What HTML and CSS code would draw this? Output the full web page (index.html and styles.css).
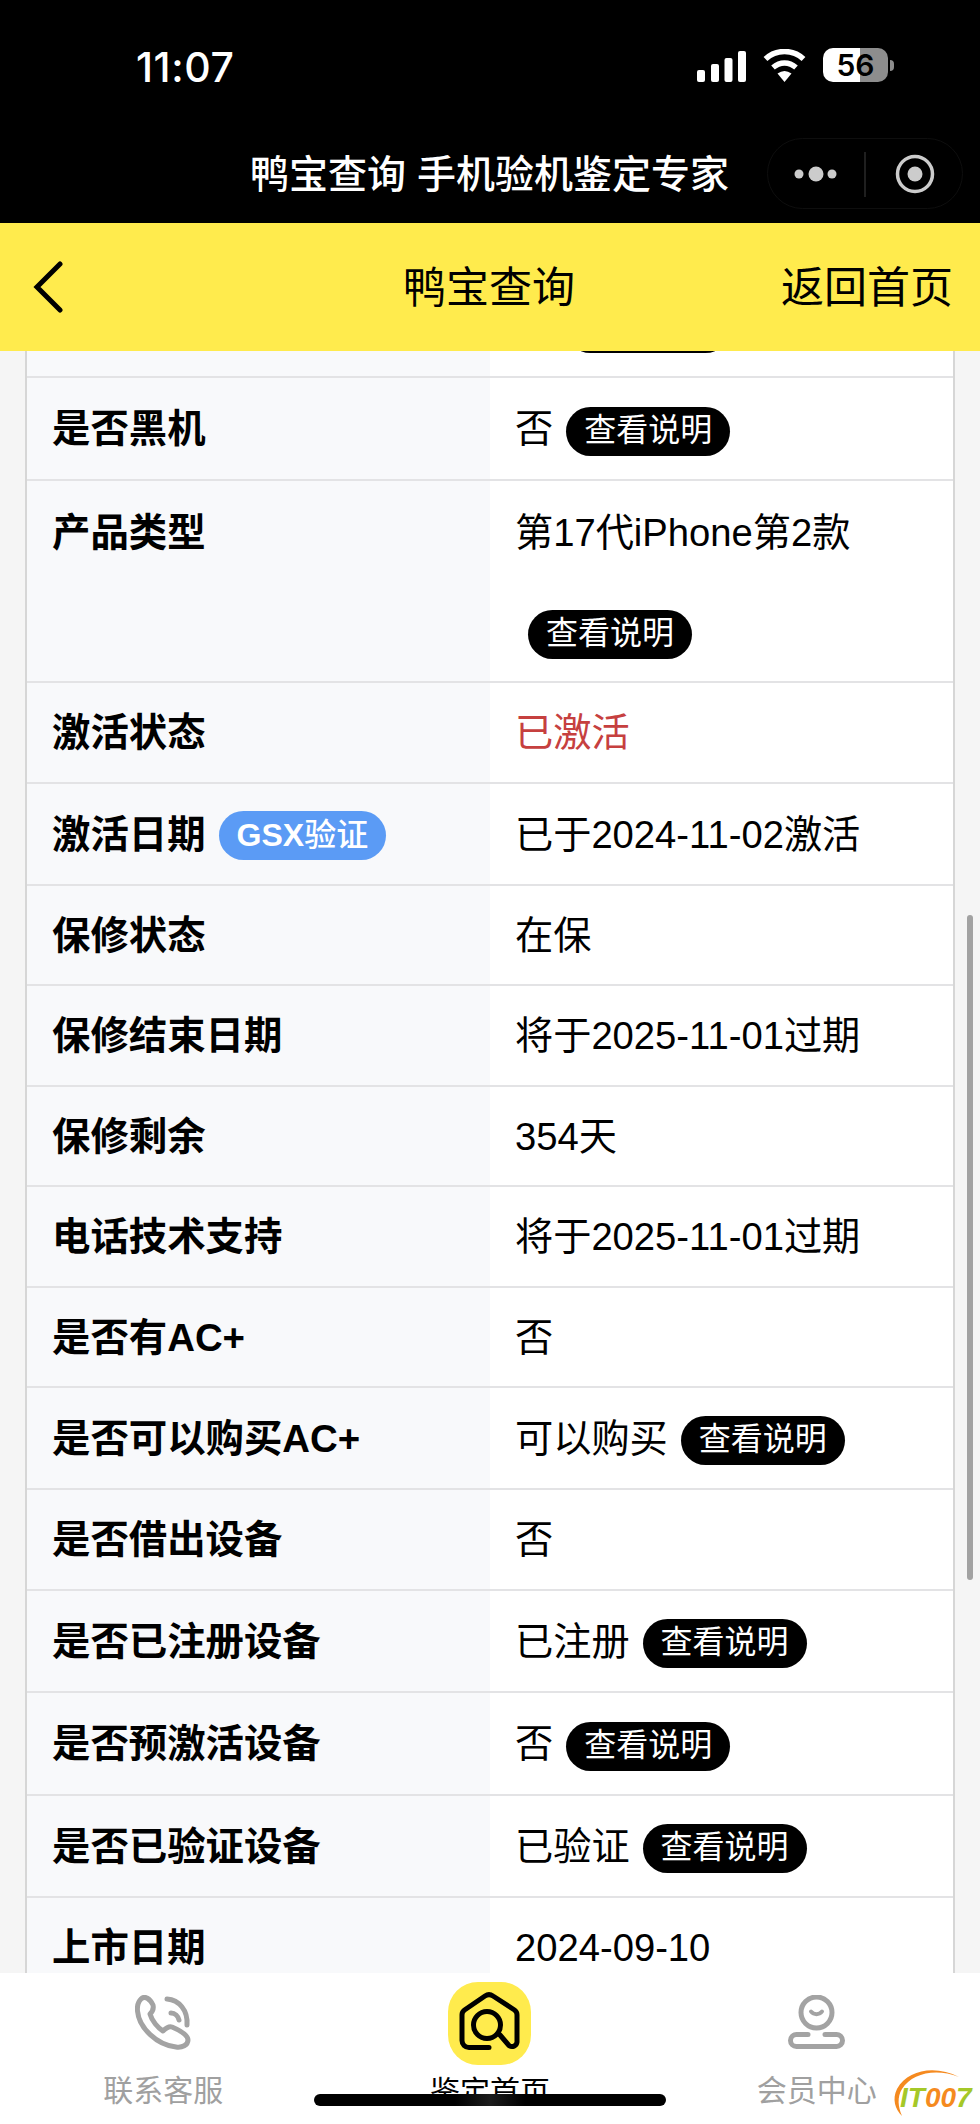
FILE: index.html
```html
<!DOCTYPE html>
<html lang="zh-CN">
<head>
<meta charset="utf-8">
<title>鸭宝查询</title>
<link rel="stylesheet" href="styles.css">
</head>
<body>
<div class="phone">
  <header class="topbar">
    <div class="status">
      <span class="time">11:07</span>
      <div class="status-icons">
        <svg class="signal" width="49" height="31" viewBox="0 0 49 31" fill="#fff"><rect x="0" y="19" width="8" height="12" rx="2"/><rect x="14" y="13" width="8" height="18" rx="2"/><rect x="27.500" y="7" width="8" height="24" rx="2"/><rect x="41" y="0" width="8" height="31" rx="2"/></svg>
        <svg class="wifi" width="43" height="33" viewBox="0 0 43 33"><path d="M2.500 10C13 0 30 0 40.500 10M10 18.500C17 12.500 26 12.500 33 18.500" fill="none" stroke="#fff" stroke-width="5.500"/><path d="M14.500 24.500Q21.500 19.500 28.500 24.500L21.500 33Z" fill="#fff"/></svg>
        <div class="battery"><span class="battery-num">56</span><i class="battery-nub"></i></div>
      </div>
    </div>
    <div class="wxbar">
      <span></span>
      <div class="wxtitle">鸭宝查询 手机验机鉴定专家</div>
      <div class="capsule">
        <svg width="196" height="71" viewBox="0 0 196 71"><circle cx="32" cy="36" r="4.500" fill="#ccc"/><circle cx="49" cy="36" r="7.500" fill="#ccc"/><circle cx="65" cy="36" r="4.500" fill="#ccc"/><path d="M98 14V59" stroke="#2a2a2a" stroke-width="1.500"/><circle cx="148" cy="36" r="17.500" fill="none" stroke="#ccc" stroke-width="3.500"/><circle cx="148" cy="36" r="7.500" fill="#ccc"/></svg>
      </div>
    </div>
  </header>

  <nav class="yellowbar">
    <div class="back"><svg width="30" height="52" viewBox="0 0 30 52"><path d="M27 3L4 26L27 49" fill="none" stroke="#000" stroke-width="5" stroke-linecap="round" stroke-linejoin="miter"/></svg></div>
    <div class="yellow-title">鸭宝查询</div>
    <div class="home-link">返回首页</div>
  </nav>

  <main class="scroller">
    <div class="table">
      <div class="row row-badge"><div class="label">是否激活锁</div><div class="value">否<span class="badge">查看说明</span></div></div>
      <div class="row row-badge"><div class="label">是否黑机</div><div class="value">否<span class="badge">查看说明</span></div></div>
      <div class="row row-wrap"><div class="label">产品类型</div><div class="value">第17代iPhone第2款<span class="badge">查看说明</span></div></div>
      <div class="row"><div class="label">激活状态</div><div class="value red">已激活</div></div>
      <div class="row row-badge"><div class="label">激活日期<span class="gsx">GSX<b>验证</b></span></div><div class="value">已于2024-11-02激活</div></div>
      <div class="row"><div class="label">保修状态</div><div class="value">在保</div></div>
      <div class="row"><div class="label">保修结束日期</div><div class="value">将于2025-11-01过期</div></div>
      <div class="row"><div class="label">保修剩余</div><div class="value">354天</div></div>
      <div class="row"><div class="label">电话技术支持</div><div class="value">将于2025-11-01过期</div></div>
      <div class="row"><div class="label">是否有AC+</div><div class="value">否</div></div>
      <div class="row row-badge"><div class="label">是否可以购买AC+</div><div class="value">可以购买<span class="badge">查看说明</span></div></div>
      <div class="row"><div class="label">是否借出设备</div><div class="value">否</div></div>
      <div class="row row-badge"><div class="label">是否已注册设备</div><div class="value">已注册<span class="badge">查看说明</span></div></div>
      <div class="row row-badge"><div class="label">是否预激活设备</div><div class="value">否<span class="badge">查看说明</span></div></div>
      <div class="row row-badge"><div class="label">是否已验证设备</div><div class="value">已验证<span class="badge">查看说明</span></div></div>
      <div class="row"><div class="label">上市日期</div><div class="value">2024-09-10</div></div>
    </div>
    <div class="scrollbar"></div>
  </main>

  <footer class="tabbar">
    <div class="tab">
      <div class="tab-icon">
        <svg width="56" height="55" viewBox="0 0 56 55" fill="none" stroke="#a3a3a3" stroke-width="5" stroke-linecap="round" stroke-linejoin="round"><path d="M6 4C10 0 15 4 18 10C19 14 17 17 15 19C17 26 23 33 28 36C31 33 34 31 37 32C44 35 53 40 53 45C53 50 47 53 41 52C22 50 4 33 2.500 16C2 11 3 7 6 4Z"/><path d="M32 4C44 5 53 15 52 30"/><path d="M36 18C40 18 43 21 44 25"/></svg>
      </div>
      <span class="tab-label">联系客服</span>
    </div>
    <div class="tab tab-active">
      <div class="tab-icon tab-icon-active">
        <svg width="83" height="83" viewBox="0 0 83 83" fill="none" stroke="#000" stroke-width="5" stroke-linecap="round" stroke-linejoin="round"><path d="M41 65.500H21a7 7 0 0 1-7-7V33a6 6 0 0 1 2.500-5L37 14a7 7 0 0 1 8 0L66.500 28a6 6 0 0 1 2.500 5V60a5 5 0 0 1-8 3.500L52 53"/><circle cx="39" cy="43" r="13.500"/></svg>
      </div>
      <span class="tab-label">鉴定首页</span>
    </div>
    <div class="tab">
      <div class="tab-icon">
        <svg width="57" height="54" viewBox="0 0 57 54" fill="none" stroke="#a3a3a3" stroke-width="5" stroke-linecap="round" stroke-linejoin="round"><circle cx="28.500" cy="17.500" r="15.500"/><path d="M23 16.500C26 20 31 20 34 16.500" stroke-width="4"/><path d="M20 39.500H8.500a6 6 0 0 0 0 12H48.500a6 6 0 0 0 0-12H37"/></svg>
      </div>
      <span class="tab-label">会员中心</span>
    </div>
    <div class="home-indicator"></div>
    <div class="watermark">
      <svg class="wm-arc" width="90" height="59" viewBox="0 0 90 59"><path d="M73 14C50 2 22 6 11 26C6 36 9 46 16 53C12 44 11 34 16 26C26 10 50 5 73 14Z" fill="#f58a1f"/></svg>
      <span class="wm-text"><span class="wm-green">IT</span><span class="wm-orange">00</span><span class="wm-green">7</span></span>
    </div>
  </footer>
</div>
</body>
</html>
```
FILE: styles.css
```css
* { box-sizing: border-box; }
html, body { margin: 0; padding: 0; background: #fff; }
body { font-family: "Liberation Sans", "Noto Sans CJK SC", sans-serif; color: #000; }
.phone { width: 980px; height: 2124px; display: flex; flex-direction: column; position: relative; overflow: hidden; }

.topbar { height: 223px; background: #000; color: #fff; flex: none; }
.status { height: 137px; padding: 48px 92px 0 136px; display: flex; justify-content: space-between; align-items: flex-start; }
.time { font-size: 41px; line-height: 38px; font-weight: 500; font-family: "Inter", "Liberation Sans", sans-serif; letter-spacing: 0.6px; }
.status-icons { display: flex; align-items: flex-start; gap: 17px; }
.signal { margin-top: 3px; }
.wifi { margin-top: 1px; }
.battery { width: 65px; height: 34px; border-radius: 10px; background: linear-gradient(90deg, #fff 0 37px, #8d8d8d 37px 100%); position: relative; color: #000; text-align: center; font-size: 30px; line-height: 34px; font-weight: 600; font-family: "Inter", "Liberation Sans", sans-serif; }
.battery-num { display: block; letter-spacing: 0; }
.battery-nub { position: absolute; left: 67px; top: 12px; width: 4px; height: 11px; border-radius: 0 4px 4px 0; background: #8d8d8d; }

.wxbar { height: 71px; display: grid; grid-template-columns: 1fr auto 1fr; align-items: center; }
.wxtitle { font-size: 39px; line-height: 71px; padding-top: 2px; font-weight: 500; white-space: nowrap; margin-left: -1px; }
.capsule { justify-self: end; width: 196px; height: 71px; margin-right: 17px; border: 1px solid #0e0e0e; border-radius: 36px; }
.capsule svg { display: block; margin: -1px; }

.yellowbar { height: 128px; background: #ffeb4d; flex: none; display: grid; grid-template-columns: 1fr auto 1fr; align-items: center; padding: 0 27px; z-index: 2; }
.back { padding-left: 6px; }
.back svg { display: block; margin-top: -1px; }
.yellow-title { font-size: 43px; line-height: 128px; padding-top: 1px; margin-left: -2px; }
.home-link { justify-self: end; font-size: 43px; line-height: 128px; padding-top: 1px; }

.scroller { flex: 1; min-height: 0; overflow: hidden; background: #f5f5f5; position: relative; }
.table { margin: -75px 25px 0 25px; border-left: 2px solid #d6d6d6; border-right: 2px solid #d6d6d6; }
.row { display: grid; grid-template-columns: 463px 1fr; border-bottom: 2px solid #e3e3e5; font-size: 38.2px; line-height: 96.4px; }
.row-badge { line-height: 98.4px; }
.row-wrap { line-height: 99.2px; }
.label { background: #f8f9fb; padding: 2px 0 0 25px; font-size: 38.4px; font-weight: 700; white-space: nowrap; }
.value { background: #fff; padding: 2px 0 0 25px; }
.red { color: #c6403f; }
.badge { display: inline-block; vertical-align: middle; height: 49px; line-height: 47px; margin: 0 0 2px 13px; padding: 0 18px; border-radius: 25px; background: #000; color: #fff; font-size: 32px; font-weight: 400; }
.row-wrap .badge { margin-bottom: 0; }
.gsx { display: inline-block; vertical-align: middle; height: 49px; line-height: 48px; margin: 0 0 3px 13px; padding: 0 18px; border-radius: 25px; background: #5b9bf5; color: #fff; font-size: 32px; font-weight: 700; }
.gsx b { font-weight: 500; }
.scrollbar { position: absolute; left: 967px; top: 564px; width: 6px; height: 665px; border-radius: 3px; background: #a2a2a2; }

.tabbar { height: 151px; flex: none; background: #fff; display: grid; grid-template-columns: repeat(3, 1fr); position: relative; z-index: 2; }
.tab { display: flex; flex-direction: column; align-items: center; padding-top: 22px; }
.tab-icon { height: 78px; display: flex; align-items: flex-start; justify-content: center; }
.tab-label { font-size: 30px; line-height: 36px; color: #a0a0a0; }
.tab-active { padding-top: 9px; }
.tab-icon-active { width: 83px; height: 83px; background: #ffeb4d; border-radius: 30px; margin-bottom: 9px; }
.tab-active .tab-label { color: #000; }
.home-indicator { position: absolute; left: 314px; top: 121px; width: 352px; height: 12px; border-radius: 6px; background: linear-gradient(90deg, #000 40%, #1c1c1c 50%, #000 60%); }
.watermark { position: absolute; left: 890px; top: 92px; width: 90px; height: 59px; }
.wm-arc { position: absolute; left: -4px; top: -2px; }
.wm-text { position: absolute; left: 10px; top: 17px; font-size: 28px; line-height: 32px; font-weight: 700; font-style: italic; white-space: nowrap; font-family: "Liberation Sans", sans-serif; }
.wm-green { color: #a5c828; }
.wm-orange { color: #f58a1f; }
```
